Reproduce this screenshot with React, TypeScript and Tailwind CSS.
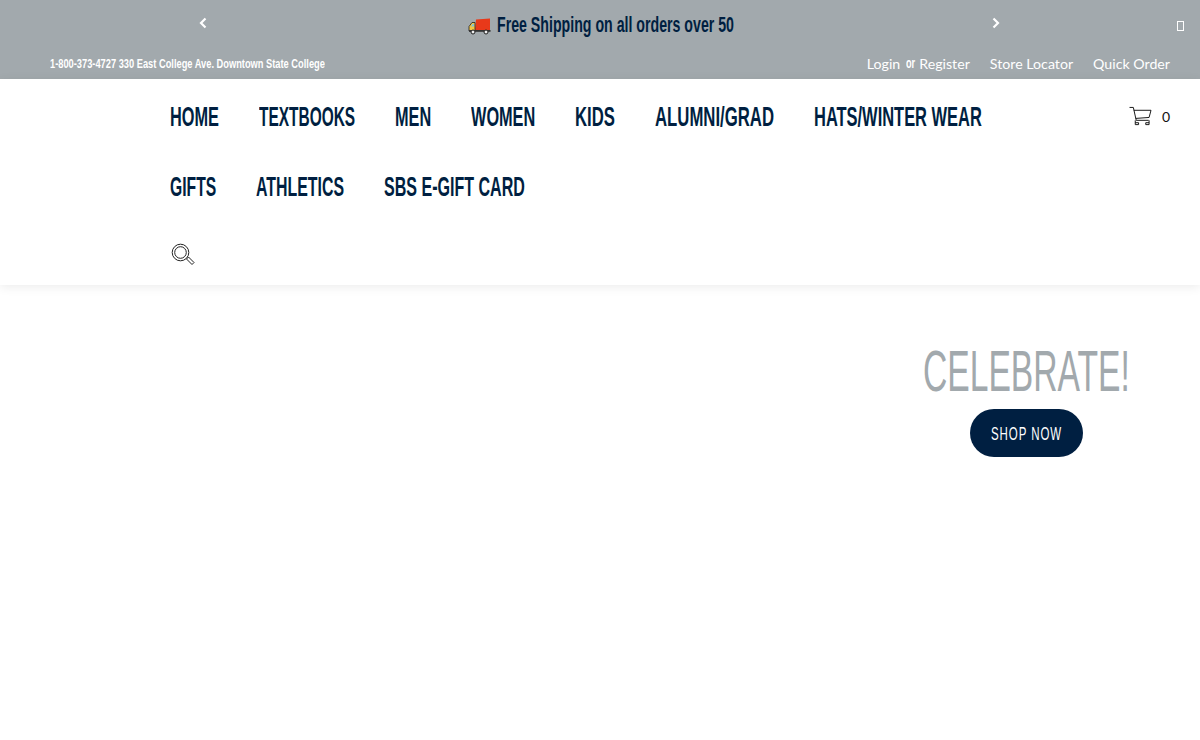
import { useLayoutEffect, useRef, useState, type ReactNode } from "react";

const sans = "font-['Liberation_Sans',sans-serif]";

function Fit({ w, className, children }: { w: number; className?: string; children: ReactNode }) {
  const inner = useRef<HTMLSpanElement>(null);
  const [scale, setScale] = useState(1);
  useLayoutEffect(() => {
    if (inner.current) setScale(w / inner.current.offsetWidth);
  }, [w]);
  return (
    <span className={`inline-block shrink-0 ${sans} ${className ?? ""}`} style={{ width: w }}>
      <span ref={inner} className="inline-block origin-left whitespace-nowrap" style={{ transform: `scaleX(${scale})` }}>
        {children}
      </span>
    </span>
  );
}

function Truck() {
  return (
    <svg width="23" height="18" viewBox="0 0 23 18" className="shrink-0">
      <path d="M8 2.500L22 1.500v11.500H7z" fill="#e8391a" />
      <path d="M7 5.500H4L1 9.500v4.500h6z" fill="#f4c542" stroke="#222" strokeWidth="0.8" />
      <path d="M3 9.500l1.500-2.500H6v2.500z" fill="#7fc6d8" />
      <rect x="1" y="13" width="21.500" height="1.800" fill="#333" />
      <circle cx="5" cy="15" r="2" fill="#eee" stroke="#222" />
      <circle cx="18" cy="15" r="2" fill="#eee" stroke="#222" />
    </svg>
  );
}

function Chevron({ right }: { right?: boolean }) {
  return (
    <svg width="8" height="12" viewBox="0 0 8 12" fill="none" stroke="#fff" strokeWidth="2.2" className="shrink-0">
      <path d={right ? "M1.500 1.500L6 6l-4.500 4.500" : "M6.500 1.500L2 6l4.500 4.500"} />
    </svg>
  );
}

function Cart() {
  return (
    <svg width="23" height="21" viewBox="0 0 24 22" fill="none" stroke="#111" strokeWidth="1">
      <path d="M0.500 1.500h4l3 13.500h13" />
      <path d="M5 4.500h18l-2 7.500-14 1" />
      <path d="M6.500 15v4.500h3.500v-2h-3.500M21 15v4.500h-3.500v-2h3.500" />
    </svg>
  );
}

function Search() {
  return (
    <svg width="26" height="26" viewBox="0 0 26 26" fill="none" stroke="#222">
      <circle cx="10.500" cy="10.500" r="8.300" strokeWidth="1" />
      <circle cx="10.500" cy="10.500" r="5.800" strokeWidth="1" />
      <path d="M16.500 17l2-2 5.500 5.500-2 2z" strokeWidth="1" fill="#fff" />
    </svg>
  );
}

const row1: [string, number][] = [["HOME", 49], ["TEXTBOOKS", 96], ["MEN", 36], ["WOMEN", 64], ["KIDS", 40], ["ALUMNI/GRAD", 119], ["HATS/WINTER WEAR", 168]];
const row2: [string, number][] = [["GIFTS", 46], ["ATHLETICS", 88], ["SBS E-GIFT CARD", 141]];

function NavRow({ items }: { items: [string, number][] }) {
  return (
    <ul className="flex h-[70px] items-center gap-10 pt-[5px]">
      {items.map(([t, w]) => (
        <li key={t} className="flex">
          <Fit w={w} className="text-[28px] font-bold leading-none text-[#001f41]">{t}</Fit>
        </li>
      ))}
    </ul>
  );
}

export default function App() {
  return (
    <div className="min-h-[740px] overflow-hidden bg-white font-['Lato',sans-serif]">
      <div className="h-[79px] bg-[#a2a9ad]">
        <div className="flex h-[47px] items-center pl-[199px] pr-[16px]">
          <span className="mb-[1px]"><Chevron /></span>
          <div className="ml-[261px] flex items-center gap-[6px]">
            <span className="mt-[4px]"><Truck /></span>
            <span className="mt-[2px] flex">
              <Fit w={237} className="text-[22px] font-bold leading-none text-[#001f41]">Free Shipping on all orders over 50</Fit>
            </span>
          </div>
          <span className="mb-[1px] ml-[258px]"><Chevron right /></span>
          <span className="ml-auto mt-[4px] h-[10px] w-[7px] border border-white" />
        </div>
        <div className="flex h-[32px] items-center justify-between pl-[50px] pr-[30px]">
          <Fit w={275} className="text-[13px] font-bold leading-none text-white">1-800-373-4727 330 East College Ave. Downtown State College</Fit>
          <div className="mt-[1px] flex items-center gap-5 text-[14.2px] text-white">
            <span className="flex items-center">
              Login
              <span className="ml-[6px] mr-[4px] flex"><Fit w={9} className="font-bold leading-none">or</Fit></span>
              Register
            </span>
            <span>Store Locator</span>
            <span>Quick Order</span>
          </div>
        </div>
      </div>
      <header className="flex h-[206px] justify-between pl-[170px] pr-[30px] shadow-[0_2px_10px_rgba(0,0,0,0.08)]">
        <nav>
          <NavRow items={row1} />
          <NavRow items={row2} />
          <div className="pt-[23px]"><Search /></div>
        </nav>
        <div className="flex h-[48px] items-center gap-[10px] pt-[27px] text-[14px] text-[#111]">
          <Cart />
          <span>0</span>
        </div>
      </header>
      <section className="flex flex-col items-end pr-[70px] pt-[52px]">
        <div className="flex flex-col items-center">
          <Fit w={207} className="text-[58px] font-normal leading-[68px] text-[#a2a9ad]">CELEBRATE!</Fit>
          <button className="mt-[4px] flex h-[48px] w-[113px] items-center justify-center rounded-[24px] bg-[#001f41] text-white">
            <span className="mt-[1px] flex">
              <Fit w={71} className="text-[18px] leading-none tracking-[0.08em]">SHOP NOW</Fit>
            </span>
          </button>
        </div>
      </section>
    </div>
  );
}
